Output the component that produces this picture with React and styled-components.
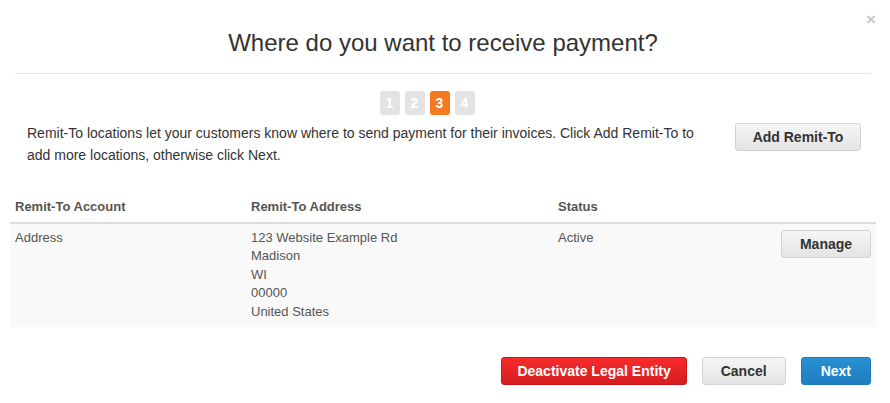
import React from 'react';
import styled, { createGlobalStyle, css } from 'styled-components';

const GlobalStyle = createGlobalStyle`
  html, body {
    margin: 0;
    padding: 0;
    background: #fff;
    font-family: "Liberation Sans", Arial, sans-serif;
    color: #333;
  }
`;

const Modal = styled.section`
  position: relative;
  width: 890px;
  height: 403px;
  background: #fff;
  box-sizing: border-box;
`;

const Close = styled.button`
  position: absolute;
  top: 11px;
  right: 14px;
  border: 0;
  background: none;
  padding: 0;
  color: #c8c8c8;
  font-size: 17px;
  font-weight: bold;
  line-height: 18px;
  font-family: "Liberation Sans", Arial, sans-serif;
  cursor: pointer;
`;

const Header = styled.header`
  margin: 0 19px 0 15px;
  padding: 30px 0 17px;
  border-bottom: 1px solid #e5e5e5;
  text-align: center;
`;

const Title = styled.h2`
  margin: 0;
  font-size: 24px;
  font-weight: normal;
  line-height: 26px;
  color: #333;
`;

const Steps = styled.ol`
  display: flex;
  justify-content: center;
  gap: 5px;
  list-style: none;
  margin: 17px 0 0;
  padding: 0 36px 0 0;
`;

const Step = styled.li`
  width: 20px;
  height: 24px;
  border-radius: 3px;
  background: ${props => props.active ? '#f47920' : '#e3e3e3'};
  color: #fff;
  font-size: 14px;
  font-weight: bold;
  line-height: 24px;
  text-align: center;
`;

const Intro = styled.div`
  display: flex;
  align-items: flex-start;
  justify-content: space-between;
  padding: 7px 29px 0 27px;
`;

const IntroText = styled.p`
  margin: 0;
  width: 690px;
  font-size: 14px;
  line-height: 22px;
  color: #333;
`;

const buttonBase = css`
  height: 28px;
  border-radius: 3px;
  font-family: "Liberation Sans", Arial, sans-serif;
  font-size: 14px;
  font-weight: bold;
  white-space: nowrap;
  cursor: pointer;
  box-sizing: border-box;
`;

const Button = styled.button`
  ${buttonBase};
  padding: 0 ${props => props.pad ?? 20}px;
  border: 1px solid #d2d2d2;
  color: #333;
  background: linear-gradient(#f5f5f5, #e4e4e4);
`;

const DangerButton = styled.button`
  ${buttonBase};
  padding: 0 15px;
  border: 1px solid #c9161b;
  color: #fff;
  background: linear-gradient(#f72b2b, #d51d21);
`;

const PrimaryButton = styled.button`
  ${buttonBase};
  padding: 0 19px;
  border: 1px solid #1e7cba;
  color: #fff;
  background: linear-gradient(#2890d3, #1f7ec0);
`;

const AddButton = styled(Button)`
  width: 126px;
  margin-top: 1px;
`;

const ManageButton = styled(Button)`
  width: 90px;
  margin-top: 1px;
`;

const Table = styled.table`
  margin: 25px 14px 0 10px;
  width: 866px;
  border-collapse: collapse;
  font-size: 13px;
  color: #555;
`;

const Th = styled.th`
  text-align: left;
  font-weight: bold;
  padding: 8px 5px 7px;
  line-height: 16px;
  border-bottom: 2px solid #ddd;
  width: ${props => props.w || 'auto'};
`;

const Row = styled.tr`
  background: #f9f9f9;
`;

const Td = styled.td`
  vertical-align: top;
  padding: 5px 5px 6px;
  line-height: 18.4px;
  text-align: ${props => props.right ? 'right' : 'left'};
`;

const Footer = styled.footer`
  display: flex;
  justify-content: flex-end;
  gap: 15px;
  padding: 30px 19px 0 0;
`;

const address = ['123 Website Example Rd', 'Madison', 'WI', '00000', 'United States'];

export default function App() {
  return (
    <Modal>
      <GlobalStyle />
      <Close aria-label="Close">×</Close>
      <Header>
        <Title>Where do you want to receive payment?</Title>
      </Header>
      <Steps>
        {[1, 2, 3, 4].map(n => (
          <Step key={n} active={n === 3}>{n}</Step>
        ))}
      </Steps>
      <Intro>
        <IntroText>
          Remit-To locations let your customers know where to send payment for their invoices. Click Add Remit-To to add more locations, otherwise click Next.
        </IntroText>
        <AddButton pad={0}>Add Remit-To</AddButton>
      </Intro>
      <Table>
        <thead>
          <tr>
            <Th w="226px">Remit-To Account</Th>
            <Th w="297px">Remit-To Address</Th>
            <Th>Status</Th>
            <Th />
          </tr>
        </thead>
        <tbody>
          <Row>
            <Td>Address</Td>
            <Td>
              {address.map(line => <div key={line}>{line}</div>)}
            </Td>
            <Td>Active</Td>
            <Td right>
              <ManageButton pad={0}>Manage</ManageButton>
            </Td>
          </Row>
        </tbody>
      </Table>
      <Footer>
        <DangerButton>Deactivate Legal Entity</DangerButton>
        <Button pad={18}>Cancel</Button>
        <PrimaryButton>Next</PrimaryButton>
      </Footer>
    </Modal>
  );
}
